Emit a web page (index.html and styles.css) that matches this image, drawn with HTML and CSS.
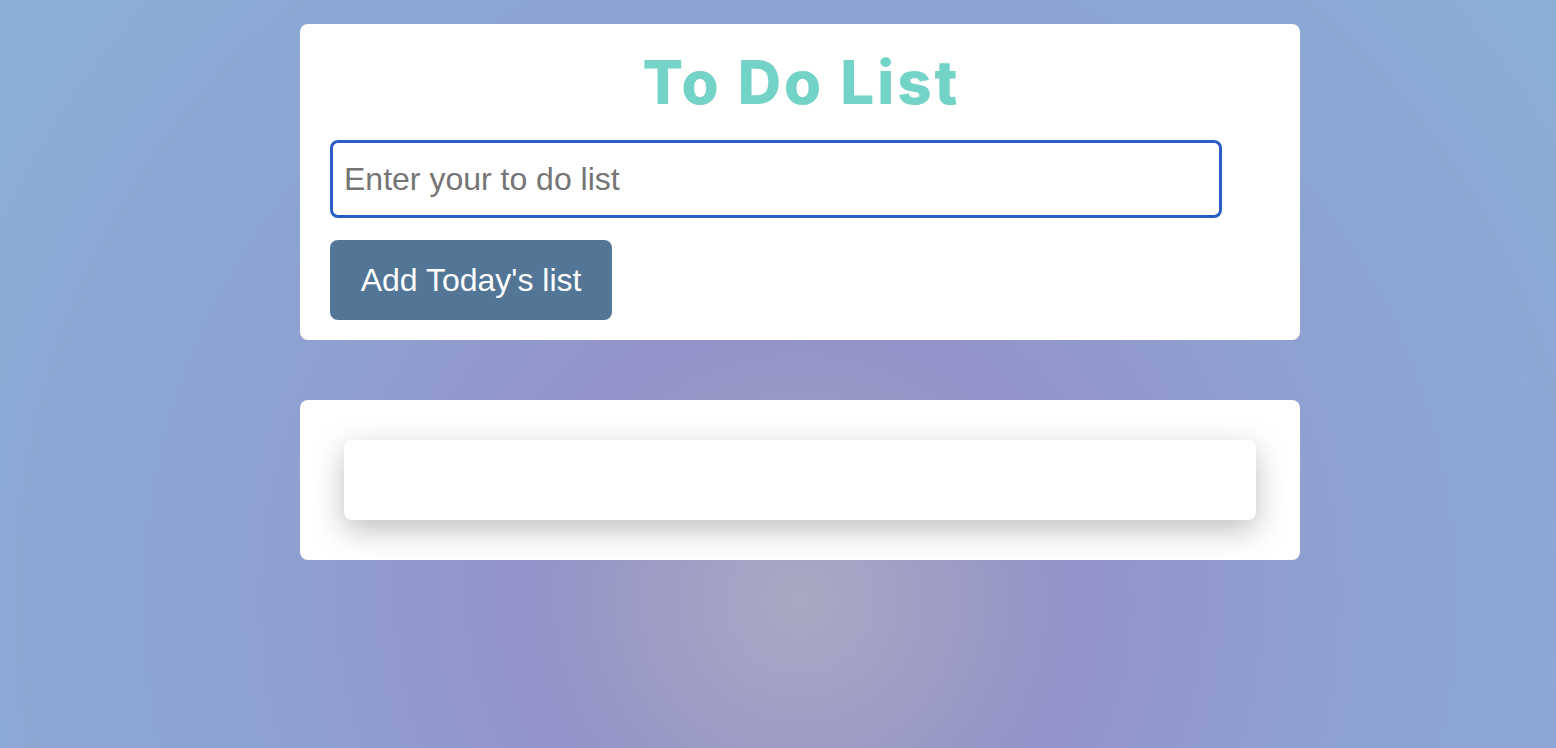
FILE: index.html
```html
<!DOCTYPE html>
<html>
<head>
<meta charset="utf-8">
<link rel="stylesheet" href="styles.css">
</head>
<body>
<div class="page">
  <section class="card form-card">
    <h1 class="title">To Do List</h1>
    <input class="todo-input" type="text" placeholder="Enter your to do list">
    <button class="add-btn">Add Today's list</button>
  </section>
  <section class="card list-card">
    <div class="list-item"></div>
  </section>
</div>
</body>
</html>
```
FILE: styles.css
```css
html, body {
  margin: 0;
  padding: 0;
  height: 100%;
}
body {
  background: radial-gradient(circle at 800px 600px, #a9a9c2 0px, #9393c9 270px, #8ea2d2 560px, #8aaed6 950px);
  font-family: "Liberation Sans", Arial, sans-serif;
  overflow: hidden;
}
.page {
  width: 1000px;
  margin-left: 300px;
  padding-top: 24px;
  display: flex;
  flex-direction: column;
  gap: 60px;
}
.card {
  background: #fff;
  border-radius: 8px;
  box-sizing: border-box;
}
.form-card {
  height: 316px;
  padding: 22px 30px 20px;
  display: flex;
  flex-direction: column;
  align-items: flex-start;
}
.title {
  margin: 0;
  align-self: stretch;
  text-align: center;
  font-family: Inter, "Open Sans", sans-serif;
  font-weight: 800;
  font-size: 60px;
  line-height: 72px;
  color: #74d3c7;
  letter-spacing: 3px;
  text-indent: 3px;
}
.todo-input {
  margin-top: 22px;
  width: 892px;
  height: 78px;
  box-sizing: border-box;
  border: 3.5px solid #2a5ec6;
  border-radius: 8px;
  padding: 0 11px;
  font-family: "Liberation Sans", Arial, sans-serif;
  font-size: 32px;
  color: #333;
  outline: none;
}
.todo-input::placeholder {
  color: #757575;
}
.add-btn {
  margin-top: 22px;
  width: 282px;
  height: 80px;
  border: none;
  border-radius: 8px;
  background: #537596;
  color: #fff;
  font-family: "Liberation Sans", Arial, sans-serif;
  font-size: 32px;
  padding: 0;
}
.list-card {
  height: 160px;
  padding: 40px 44px;
}
.list-item {
  height: 80px;
  background: #fff;
  border-radius: 8px;
  box-shadow: 0 10px 30px rgba(0, 0, 0, 0.25);
}
```
